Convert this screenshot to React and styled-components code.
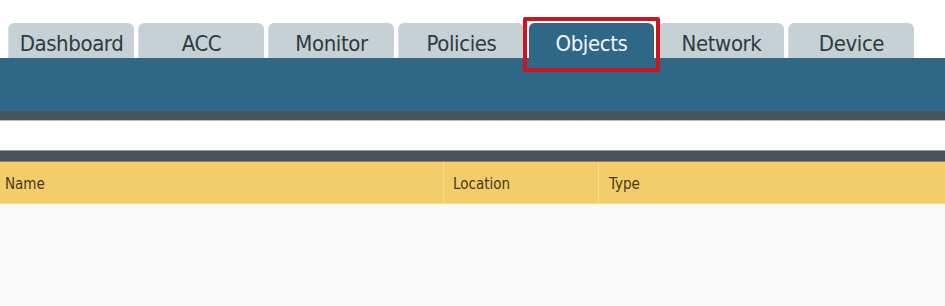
import React from 'react';
import styled, { createGlobalStyle } from 'styled-components';

const GlobalStyle = createGlobalStyle`
  body {
    margin: 0;
    background: #ffffff;
  }
`;

const Page = styled.div`
  width: 945px;
  height: 306px;
  overflow: hidden;
  display: flex;
  flex-direction: column;
  background: #fafafa;
`;

const TabRow = styled.nav`
  display: flex;
  gap: 4px;
  padding: 23px 0 0 8px;
  background: #ffffff;
`;

const Tab = styled.div`
  position: relative;
  width: 126px;
  height: 35px;
  border-radius: 6px 6px 0 0;
  display: flex;
  align-items: center;
  justify-content: center;
  font-family: "DejaVu Sans", sans-serif;
  font-stretch: condensed;
  font-size: 22px;
  letter-spacing: -0.4px;
  padding-top: 6px;
  box-sizing: border-box;
  color: ${(p) => (p.$active ? '#f2f6f8' : '#2e3a40')};
  background: ${(p) => (p.$active ? '#2f6787' : '#c6d1d5')};
  border-left: 1px solid ${(p) => (p.$active ? '#e8eef0' : '#d6dee1')};
`;

const Highlight = styled.span`
  position: absolute;
  left: -6px;
  top: -6px;
  right: -6px;
  bottom: -14px;
  border: 4px solid #c9161f;
  border-radius: 2px;
  pointer-events: none;
  z-index: 2;
`;

const BlueBar = styled.div`
  height: 53px;
  background: #2f6787;
`;

const DarkBand = styled.div`
  height: ${(p) => p.$h}px;
  background: #47535a;
  border-top: 1px solid ${(p) => p.$top || '#47535a'};
  border-bottom: 1px solid ${(p) => p.$bottom || '#47535a'};
`;

const Spacer = styled.div`
  height: 29px;
  background: #ffffff;
`;

const HeaderRow = styled.div`
  display: grid;
  grid-template-columns: 443px 155px 1fr;
  height: 41px;
  background: #f3cd6a;
  border-bottom: 1px solid #f7dc92;
`;

const HeaderCell = styled.div`
  display: flex;
  align-items: center;
  padding-left: ${(p) => p.$pad}px;
  padding-top: 2px;
  font-family: "DejaVu Sans", "Verdana", sans-serif;
  font-stretch: semi-condensed;
  font-size: 15px;
  color: #45381a;
  border-left: ${(p) => (p.$first ? 'none' : '1px solid #f8dc95')};
`;

const Body = styled.div`
  flex: 1;
  background: #fafafa;
`;

const tabs = ['Dashboard', 'ACC', 'Monitor', 'Policies', 'Objects', 'Network', 'Device'];

export default function App() {
  return (
    <Page>
      <GlobalStyle />
      <TabRow>
        {tabs.map((t) => (
          <Tab key={t} $active={t === 'Objects'}>
            {t}
            {t === 'Objects' && <Highlight />}
          </Tab>
        ))}
      </TabRow>
      <BlueBar />
      <DarkBand $h={8} $bottom="#b9bfc2" />
      <Spacer />
      <DarkBand $h={10} $top="#9aa2a6" $bottom="#8f8452" />
      <HeaderRow>
        <HeaderCell $first $pad={5}>Name</HeaderCell>
        <HeaderCell $pad={9}>Location</HeaderCell>
        <HeaderCell $pad={10}>Type</HeaderCell>
      </HeaderRow>
      <Body />
    </Page>
  );
}
